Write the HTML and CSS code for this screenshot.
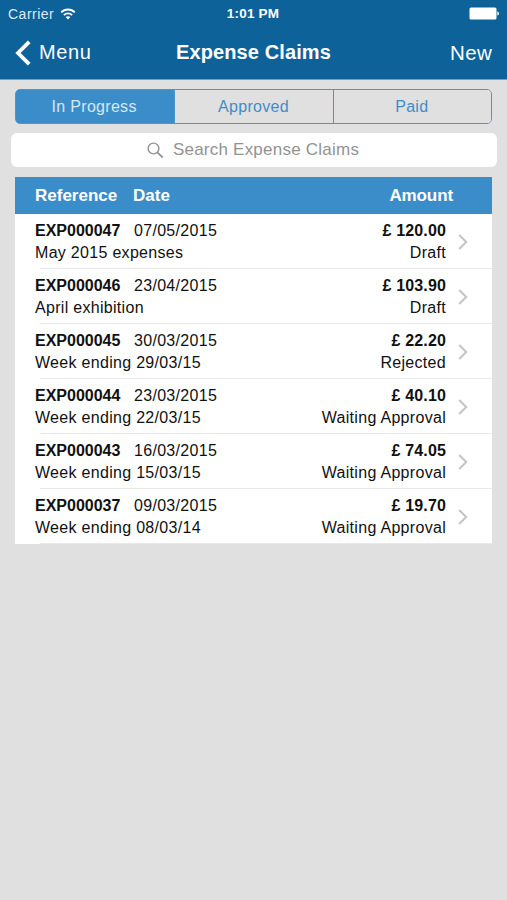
FILE: index.html
```html
<!DOCTYPE html>
<html lang="en">
<head>
<meta charset="utf-8">
<title>Expense Claims</title>
<link rel="stylesheet" href="styles.css">
</head>
<body>
<header class="top">
  <div class="status">
    <div class="carrier">Carrier
      <svg width="16" height="12" viewBox="0 0 16 12" fill="none" stroke="#fff" stroke-width="1.9"><path d="M1.2 4.4C5 .5 11 .5 14.8 4.4M3.9 7.1c2.3-2.3 5.9-2.3 8.2 0"/><path d="M8 11.6 5.6 9.1c1.4-1.2 3.4-1.2 4.8 0z" fill="#fff" stroke="none"/></svg>
    </div>
    <div class="time">1:01 PM</div>
    <svg class="battery" width="31" height="13" viewBox="0 0 31 13" fill="#fff"><rect x="0.5" y="0.5" width="27" height="12" rx="1.5"/><path d="M28.3 4.5c2.2.4 2.2 3.6 0 4z"/></svg>
  </div>
  <nav class="nav">
    <a class="back"><svg width="16" height="26" viewBox="0 0 16 26" fill="none" stroke="#fff" stroke-width="3.8"><path d="M14.2 1.8 3 13l11.2 11.2"/></svg>Menu</a>
    <h1>Expense Claims</h1>
    <a class="new">New</a>
  </nav>
</header>
<main>
  <div class="tabs"><div class="tab active">In Progress</div><div class="tab">Approved</div><div class="tab">Paid</div></div>
  <div class="search"><svg width="17" height="17" viewBox="0 0 17 17" fill="none" stroke="#929292" stroke-width="1.4"><circle cx="6.5" cy="6.5" r="5.4"/><path d="m10.4 10.4 5.4 5.2" stroke-width="1.8"/></svg>Search Expense Claims</div>
  <section class="claims">
    <div class="head"><span class="ref">Reference</span><span>Date</span><span class="amount">Amount</span></div>
    <div class="row"><div class="info"><div><b>EXP000047</b><span>07/05/2015</span></div><div>May 2015 expenses</div></div><div class="value"><b>£ 120.00</b><div>Draft</div></div><svg class="chev" viewBox="0 0 11 16"><path d="m1.2 1 7 7-7 7"/></svg></div>
    <div class="row"><div class="info"><div><b>EXP000046</b><span>23/04/2015</span></div><div>April exhibition</div></div><div class="value"><b>£ 103.90</b><div>Draft</div></div><svg class="chev" viewBox="0 0 11 16"><path d="m1.2 1 7 7-7 7"/></svg></div>
    <div class="row"><div class="info"><div><b>EXP000045</b><span>30/03/2015</span></div><div>Week ending 29/03/15</div></div><div class="value"><b>£ 22.20</b><div>Rejected</div></div><svg class="chev" viewBox="0 0 11 16"><path d="m1.2 1 7 7-7 7"/></svg></div>
    <div class="row"><div class="info"><div><b>EXP000044</b><span>23/03/2015</span></div><div>Week ending 22/03/15</div></div><div class="value"><b>£ 40.10</b><div>Waiting Approval</div></div><svg class="chev" viewBox="0 0 11 16"><path d="m1.2 1 7 7-7 7"/></svg></div>
    <div class="row"><div class="info"><div><b>EXP000043</b><span>16/03/2015</span></div><div>Week ending 15/03/15</div></div><div class="value"><b>£ 74.05</b><div>Waiting Approval</div></div><svg class="chev" viewBox="0 0 11 16"><path d="m1.2 1 7 7-7 7"/></svg></div>
    <div class="row"><div class="info"><div><b>EXP000037</b><span>09/03/2015</span></div><div>Week ending 08/03/14</div></div><div class="value"><b>£ 19.70</b><div>Waiting Approval</div></div><svg class="chev" viewBox="0 0 11 16"><path d="m1.2 1 7 7-7 7"/></svg></div>
  </section>
</main>
</body>
</html>
```
FILE: styles.css
```css
* { box-sizing: border-box; }
body {
  margin: 0;
  min-height: 900px;
  background: #e0e0e0;
  font-family: "Liberation Sans", Arial, sans-serif;
  color: #111;
}
svg { display: block; flex: none; }
.top {
  height: 80px;
  background: #0d6299;
  border-bottom: 1px solid #6ba2c6;
  color: #fff;
}
.status {
  display: grid;
  grid-template-columns: 1fr auto 1fr;
  align-items: center;
  height: 27px;
  padding: 0 7px 0 8px;
}
.carrier { display: flex; align-items: center; gap: 6px; font-size: 14px; letter-spacing: 0.5px; color: #dceaf4; }
.time { margin-left: -2px; font-size: 13.5px; font-weight: bold; letter-spacing: 0.2px; }
.battery { justify-self: end; }
.nav {
  display: grid;
  grid-template-columns: 1fr auto 1fr;
  align-items: center;
  height: 51px;
  padding: 0 15px;
  font-size: 20px;
}
.back { display: flex; align-items: center; gap: 8px; letter-spacing: 0.6px; }
.new { justify-self: end; font-size: 20.5px; letter-spacing: 0.3px; }
h1 { margin: 0; font-size: 20px; letter-spacing: 0.1px; }
main { padding: 9px 15px 0; }
.tabs {
  display: grid;
  grid-template-columns: repeat(3, 1fr);
  height: 35px;
  border: 1px solid #4b96cd;
  border-radius: 5px;
  background: linear-gradient(90deg, #3b8dc9 50%, #e0e0e0 50%) border-box;
}
.tab {
  display: flex;
  align-items: center;
  justify-content: center;
  padding-right: 2px;
  background: #e0e0e0;
  font-size: 16px;
  letter-spacing: 0.3px;
  color: #3e8dc8;
}
.tab + .tab { border-left: 1px solid #4b96cd; padding-right: 1px; }
.tab:last-child { border-radius: 0 4px 4px 0; }
.tab.active { background: #3b8dc9; color: #d6e8f5; border-radius: 4px 0 0 4px; }
.search {
  display: flex;
  align-items: center;
  justify-content: center;
  gap: 9px;
  height: 34px;
  margin: 9px -5px 0 -4px;
  padding-right: 2px;
  border-radius: 6px;
  background: #fff;
  color: #929292;
  font-size: 17px;
  letter-spacing: 0.23px;
}
.claims { margin-top: 10px; background: #fff; }
.head {
  display: flex;
  align-items: center;
  height: 37px;
  padding: 0 39px 0 20px;
  background: #3b8dc9;
  color: #fff;
  font-size: 17px;
  font-weight: bold;
}
.ref { width: 98px; }
.amount { margin-left: auto; letter-spacing: -0.1px; }
.row {
  display: flex;
  height: 55px;
  padding: 6px 23px 0 20px;
  font-size: 16px;
  line-height: 22px;
  letter-spacing: 0.3px;
  background: linear-gradient(#e9e9e9, #e9e9e9) 25px 100% / 100% 1px no-repeat;
}
.info { flex: 1; }
.info b { display: inline-block; width: 99px; letter-spacing: 0; }
.value { text-align: right; }
.value b { letter-spacing: 0.15px; }
.chev { width: 11px; height: 16px; margin: 14px 0 0 12px; fill: none; stroke: #c4c4c8; stroke-width: 2; }
```
